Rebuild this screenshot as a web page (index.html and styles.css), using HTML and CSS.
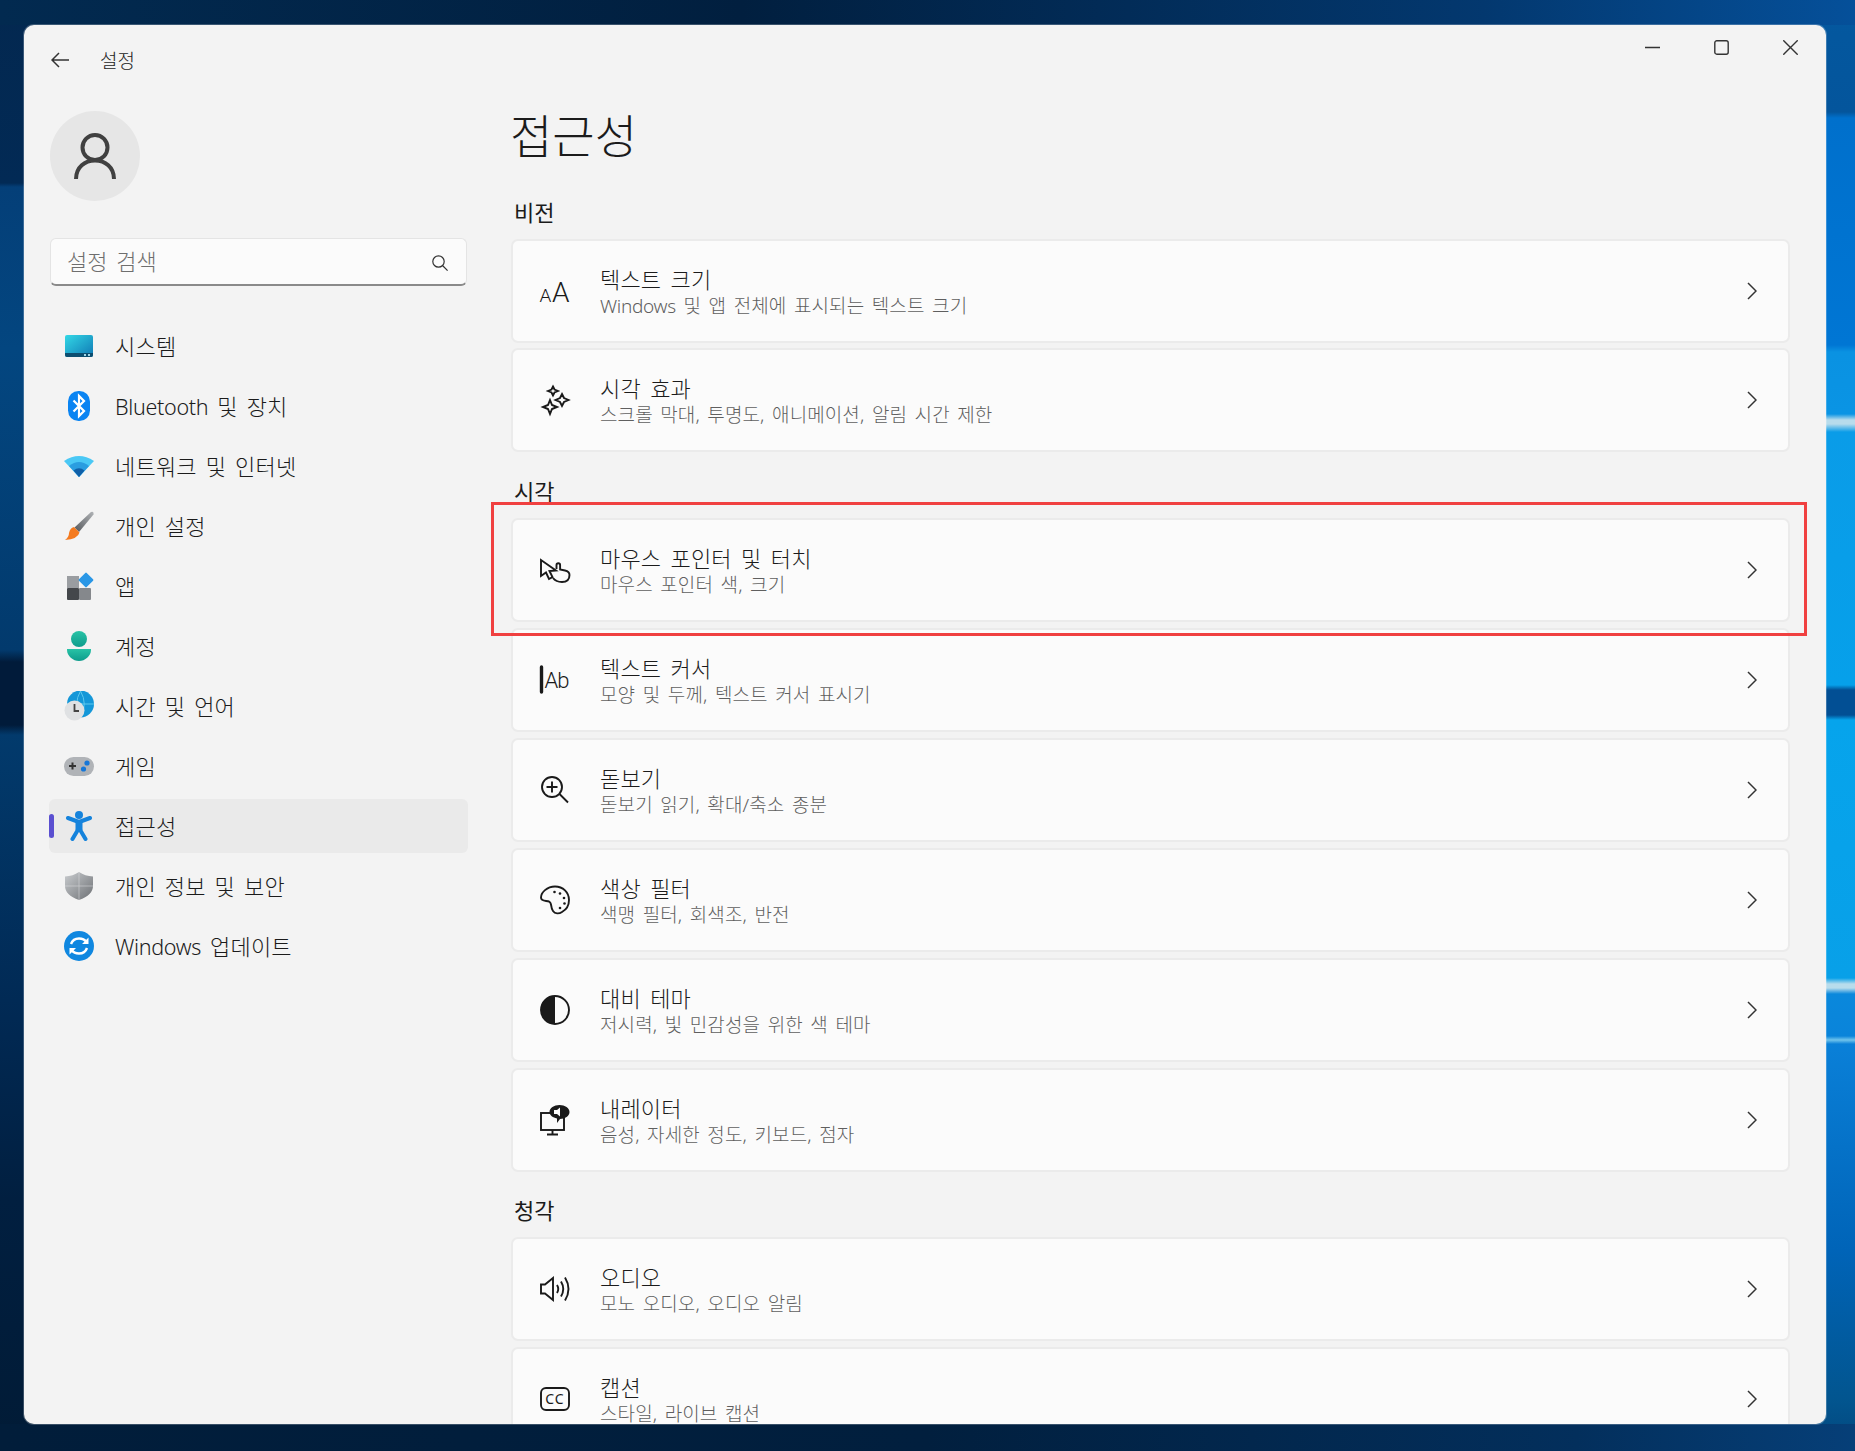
FILE: index.html
```html
<!DOCTYPE html>
<html lang="ko">
<head>
    <meta charset="UTF-8">
    <meta name="viewport" content="width=device-width, initial-scale=1.0">
    <title>설정</title>
    <link rel="stylesheet" href="styles.css">
</head>
<body>
    <div class="window">
        <aside class="sidebar">
            <div class="topbar">
                <svg class="back" viewBox="0 0 18 16"><path d="M8 1 L1 8 L8 15 M1 8 H18"/></svg>
                <span>설정</span>
            </div>
            <div class="avatar">
                <svg viewBox="0 0 42 46"><circle cx="21" cy="14.5" r="12.5"/><path d="M2 46 C2 34 11 27.5 21 27.5 C31 27.5 40 34 40 46"/></svg>
            </div>
            <div class="search">
                <span>설정 검색</span>
                <svg viewBox="0 0 16 16"><circle cx="6.5" cy="6.5" r="5.7"/><path d="M10.5 10.5 L15.6 15.6"/></svg>
            </div>
            <nav class="nav">
                <div class="nav-item">
                    <svg viewBox="0 0 30 30">
                        <defs><linearGradient id="sys" x1="0" y1="0" x2="1" y2="1"><stop offset="0" stop-color="#33d8e6"/><stop offset="1" stop-color="#0f78b4"/></linearGradient></defs>
                        <rect x="1" y="4" width="28" height="22" rx="2" fill="url(#sys)"/>
                        <path d="M1 22 H29 V24 a2 2 0 0 1 -2 2 H3 a2 2 0 0 1 -2 -2 Z" fill="#0c4e70"/>
                        <rect x="20" y="23" width="2" height="2" fill="#9fd6e8"/><rect x="24" y="23" width="2" height="2" fill="#9fd6e8"/>
                    </svg>
                    <span>시스템</span>
                </div>
                <div class="nav-item">
                    <svg viewBox="0 0 30 30">
                        <rect x="4" y="0" width="22" height="30" rx="10.5" fill="#0a84f2"/>
                        <path d="M9.5 9.5 L20 20 L15 25 V5 L20 10 L9.5 20.5" fill="none" stroke="#fff" stroke-width="2.2"/>
                    </svg>
                    <span><i>Bluetooth</i> 및 장치</span>
                </div>
                <div class="nav-item">
                    <svg viewBox="0 0 30 30">
                        <path d="M0 10 Q15 0 30 10 L15 26 Z" fill="#4ac8f5"/>
                        <path d="M5 15 Q15 7 25 15 L15 26 Z" fill="#2a9de0"/>
                        <path d="M9.5 19.5 Q15 15 20.5 19.5 L15 26 Z" fill="#0f5fa8"/>
                    </svg>
                    <span>네트워크 및 인터넷</span>
                </div>
                <div class="nav-item">
                    <svg viewBox="0 0 30 30">
                        <defs><linearGradient id="brush" x1="0" y1="1" x2="1" y2="0"><stop offset="0" stop-color="#55585c"/><stop offset="1" stop-color="#b0b3b6"/></linearGradient></defs>
                        <path d="M27 1 Q30 0 29.5 3.5 L15 21 L10.5 16.5 Z" fill="url(#brush)"/>
                        <path d="M10 16 L15.5 21.5 Q14 28 1 29 Q5 26 5 22 Q6 17 10 16 Z" fill="#f47a1f"/>
                    </svg>
                    <span>개인 설정</span>
                </div>
                <div class="nav-item">
                    <svg viewBox="0 0 30 30">
                        <rect x="3" y="5" width="12" height="12" fill="#9a9da1"/>
                        <rect x="3" y="17" width="12" height="12" rx="1" fill="#44474b"/>
                        <rect x="15" y="17" width="12" height="12" rx="1" fill="#85888c"/>
                        <rect x="16.5" y="3.5" width="11" height="11" rx="1" transform="rotate(45 22 9)" fill="#2a97e6"/>
                    </svg>
                    <span>앱</span>
                </div>
                <div class="nav-item">
                    <svg viewBox="0 0 30 30">
                        <defs><linearGradient id="acc" x1="0" y1="0" x2="0" y2="1"><stop offset="0" stop-color="#28c3a6"/><stop offset="1" stop-color="#0e9c8c"/></linearGradient></defs>
                        <circle cx="15" cy="8" r="8" fill="url(#acc)"/>
                        <path d="M3 18 H27 V19 C27 25 21 30 15 30 C9 30 3 25 3 19 Z" fill="url(#acc)"/>
                    </svg>
                    <span>계정</span>
                </div>
                <div class="nav-item">
                    <svg viewBox="0 0 30 30">
                        <circle cx="16.5" cy="13" r="13.5" fill="#1497d8"/>
                        <path d="M3 13 H30 M16.5 0 Q9 13 16.5 26 M16.5 0 Q24 13 16.5 26" fill="none" stroke="#5cc8ee" stroke-width="1"/>
                        <circle cx="10.5" cy="19.5" r="10" fill="#dfe1e3"/>
                        <path d="M10.5 13 V20 H15" fill="none" stroke="#444" stroke-width="1.8"/>
                    </svg>
                    <span>시간 및 언어</span>
                </div>
                <div class="nav-item">
                    <svg viewBox="0 0 30 30">
                        <rect x="0" y="6" width="30" height="19" rx="9.5" fill="#b0b3b7"/>
                        <path d="M5 15 H12 M8.5 11.5 V18.5" stroke="#333" stroke-width="2"/>
                        <circle cx="23" cy="12" r="2.6" fill="#1677d8"/><circle cx="19.5" cy="18" r="2.6" fill="#1677d8"/>
                    </svg>
                    <span>게임</span>
                </div>
                <div class="nav-item active">
                    <svg viewBox="0 0 30 30">
                        <circle cx="15" cy="4" r="4" fill="#1583dc"/>
                        <path d="M4 7 L15 11 L26 7 M15 17 L8.5 28 M15 17 L21.5 28" fill="none" stroke="#1583dc" stroke-width="4" stroke-linecap="round"/>
                        <path d="M15 10 V19" fill="none" stroke="#1583dc" stroke-width="7"/>
                    </svg>
                    <span>접근성</span>
                </div>
                <div class="nav-item">
                    <svg viewBox="0 0 30 30">
                        <defs><linearGradient id="shield" x1="0" y1="0" x2="1" y2="1"><stop offset="0" stop-color="#c9cccf"/><stop offset="1" stop-color="#6d7074"/></linearGradient></defs>
                        <path d="M15 1 Q21 5 29 5.5 V15 Q29 24 15 29 Q1 24 1 15 V5.5 Q9 5 15 1 Z" fill="url(#shield)"/>
                        <path d="M15 1 V29 M1 15 H29" stroke="#e4e5e7" stroke-width=".8" opacity=".6"/>
                    </svg>
                    <span>개인 정보 및 보안</span>
                </div>
                <div class="nav-item">
                    <svg viewBox="0 0 30 30">
                        <circle cx="15" cy="15" r="15" fill="#0f87e0"/>
                        <path d="M7 13 Q9 7.5 15 7.5 Q20 7.5 22.5 11 M23 17 Q21 22.5 15 22.5 Q10 22.5 7.5 19" fill="none" stroke="#fff" stroke-width="2.4"/>
                        <path d="M24.5 6.5 V13 H18 Z M5.5 23.5 V17 H12 Z" fill="#fff"/>
                    </svg>
                    <span><i>Windows</i> 업데이트</span>
                </div>
            </nav>
        </aside>

        <main class="content">
            <div class="controls">
                <svg viewBox="0 0 15 15"><path d="M0 7.5 H15"/></svg>
                <svg viewBox="0 0 15 15"><rect x=".8" y=".8" width="13.4" height="13.4" rx="2"/></svg>
                <svg viewBox="0 0 15 15"><path d="M.3 .3 L14.7 14.7 M14.7 .3 L.3 14.7"/></svg>
            </div>
            <h1>접근성</h1>

            <h2 class="first">비전</h2>
            <div class="group tight">
                <div class="card">
                    <svg class="icon" viewBox="0 0 30 30"><text x="-0.5" y="26" class="glyph small">A</text><text x="12" y="26" class="glyph big">A</text></svg>
                    <div class="card-text"><div class="card-title">텍스트 크기</div><div class="card-sub"><i>Windows</i> 및 앱 전체에 표시되는 텍스트 크기</div></div>
                    <svg class="chevron" viewBox="0 0 10 18"><path d="M1 1 L9 9 L1 17"/></svg>
                </div>
                <div class="card">
                    <svg class="icon" viewBox="0 0 30 30"><path d="M13 1.5 L14.5 4.5 L18 6 L14.5 7.5 L13 10.5 L11.5 7.5 L8 6 L11.5 4.5 Z M22 9 L24 13 L28.5 15 L24 17 L22 21 L20 17 L15.5 15 L20 13 Z M10 15 L12 20 L17 22 L12 24 L10 29 L8 24 L3 22 L8 20 Z"/></svg>
                    <div class="card-text"><div class="card-title">시각 효과</div><div class="card-sub">스크롤 막대, 투명도, 애니메이션, 알림 시간 제한</div></div>
                    <svg class="chevron" viewBox="0 0 10 18"><path d="M1 1 L9 9 L1 17"/></svg>
                </div>
            </div>

            <h2>시각</h2>
            <div class="group">
                <div class="card">
                    <svg class="icon" viewBox="0 0 30 30"><path d="M1 5 V21 L6 17.5 L9 24 L12.5 22 L9.5 16 L16 15.5 Z"/><path d="M16.5 14 V10 a1.8 1.8 0 0 1 3.6 0 V14.5 L25 15.5 Q29.5 16.5 29.5 20 Q29.5 27 22 27 Q16 27 13 23"/></svg>
                    <div class="card-text"><div class="card-title">마우스 포인터 및 터치</div><div class="card-sub">마우스 포인터 색, 크기</div></div>
                    <svg class="chevron" viewBox="0 0 10 18"><path d="M1 1 L9 9 L1 17"/></svg>
                </div>
                <div class="card">
                    <svg class="icon" viewBox="0 0 30 30"><path class="bar" d="M1.5 2 V27"/><text x="4.5" y="22.5" class="glyph ab">Ab</text></svg>
                    <div class="card-text"><div class="card-title">텍스트 커서</div><div class="card-sub">모양 및 두께, 텍스트 커서 표시기</div></div>
                    <svg class="chevron" viewBox="0 0 10 18"><path d="M1 1 L9 9 L1 17"/></svg>
                </div>
                <div class="card">
                    <svg class="icon" viewBox="0 0 30 30"><circle cx="12" cy="12" r="10"/><path d="M6.5 12 H17.5 M12 6.5 V17.5 M19.5 19 L28 27.5"/></svg>
                    <div class="card-text"><div class="card-title">돋보기</div><div class="card-sub">돋보기 읽기, 확대/축소 종분</div></div>
                    <svg class="chevron" viewBox="0 0 10 18"><path d="M1 1 L9 9 L1 17"/></svg>
                </div>
                <div class="card">
                    <svg class="icon" viewBox="0 0 30 30"><path d="M15 1.5 C7 1.5 1 7.5 1 12.5 C1 16.5 6 15.5 9 16.5 C12.5 18 10 22 13 26 C15 29 19 29 22 27 C26.5 24.5 29 20 29 15 C29 7.5 23 1.5 15 1.5 Z"/><g class="dots"><circle cx="14.5" cy="7" r="1.3"/><circle cx="20" cy="8.5" r="1.3"/><circle cx="24" cy="13" r="1.3"/><circle cx="24.5" cy="18.5" r="1.3"/><circle cx="20" cy="23" r="1.3"/></g></svg>
                    <div class="card-text"><div class="card-title">색상 필터</div><div class="card-sub">색맹 필터, 회색조, 반전</div></div>
                    <svg class="chevron" viewBox="0 0 10 18"><path d="M1 1 L9 9 L1 17"/></svg>
                </div>
                <div class="card">
                    <svg class="icon" viewBox="0 0 30 30"><circle cx="15" cy="15" r="14"/><path class="solid" d="M15 1 A14 14 0 0 0 15 29 Z"/></svg>
                    <div class="card-text"><div class="card-title">대비 테마</div><div class="card-sub">저시력, 빛 민감성을 위한 색 테마</div></div>
                    <svg class="chevron" viewBox="0 0 10 18"><path d="M1 1 L9 9 L1 17"/></svg>
                </div>
                <div class="card">
                    <svg class="icon" viewBox="0 0 30 30"><rect x="1" y="8" width="23" height="17"/><path d="M12.5 25 V29 M7 29.5 H18"/><path class="solid" d="M19.5 0 C25 0 29.5 3 29.5 7 C29.5 11 25 14 20 14 L17 18 V13.5 C13 12.5 9.5 10.5 9.5 7 C9.5 3 14 0 19.5 0 Z"/><path class="cut" d="M14 5 H17 L20 2.5 V11.5 L17 9 H14 Z"/></svg>
                    <div class="card-text"><div class="card-title">내레이터</div><div class="card-sub">음성, 자세한 정도, 키보드, 점자</div></div>
                    <svg class="chevron" viewBox="0 0 10 18"><path d="M1 1 L9 9 L1 17"/></svg>
                </div>
            </div>

            <h2 class="hearing">청각</h2>
            <div class="group">
                <div class="card">
                    <svg class="icon" viewBox="0 0 30 30"><path d="M1 10.5 H5 L13 4 V26 L5 19.5 H1 Z"/><path d="M17 11 Q19.5 15 17 19 M21 7.5 Q25.5 15 21 22.5 M25 3.5 Q32 15 25 26.5"/></svg>
                    <div class="card-text"><div class="card-title">오디오</div><div class="card-sub">모노 오디오, 오디오 알림</div></div>
                    <svg class="chevron" viewBox="0 0 10 18"><path d="M1 1 L9 9 L1 17"/></svg>
                </div>
                <div class="card">
                    <svg class="icon" viewBox="0 0 30 30"><rect x="1" y="4" width="28" height="22" rx="5"/><text x="15" y="20" class="glyph cc">CC</text></svg>
                    <div class="card-text"><div class="card-title">캡션</div><div class="card-sub">스타일, 라이브 캡션</div></div>
                    <svg class="chevron" viewBox="0 0 10 18"><path d="M1 1 L9 9 L1 17"/></svg>
                </div>
            </div>
        </main>
    </div>
    <div class="highlight"></div>
</body>
</html>
```

FILE: styles.css
```css
* {
    box-sizing: border-box;
}
html, body {
    height: 100%;
}
body {
    margin: 0;
    padding: 25px 29px 27px 24px;
    overflow: hidden;
    font-family: "Noto Sans", "Noto Sans CJK KR", sans-serif;
    font-weight: 300;
    color: #1b1b1b;
    background:
        linear-gradient(to right, #022a50, #011f3f 40%, #03386f 80%, #05509a) 0 0 / 100% 25px no-repeat,
        linear-gradient(to right, #011d3a, #011f3e 50%, #032f5c 85%, #063f78) 0 100% / 100% 27px no-repeat,
        linear-gradient(#032850 0, #022a55 183px, #043f78 187px, #034680 350px, #023a6d 650px, #011b3a 662px, #011b3a 725px, #023a6c 735px, #012a55 1000px, #011f40 1200px, #011b36 100%) 0 0 / 50% 100% no-repeat,
        linear-gradient(#04589f 0, #04559c 112px, #0070cc 118px, #0076d4 345px, #0a92e2 352px, #0a94e4 414px, #b8dcec 420px, #b8dcec 424px, #0a9ce8 432px, #06a0ea 685px, #024f94 690px, #024f94 715px, #06a4ec 720px, #08a0e8 978px, #b8dcec 984px, #b8dcec 988px, #0a88dc 994px, #0a84da 1036px, #70c4ec 1040px, #0a80d8 1044px, #0064b8 1250px, #02558f 1400px, #03467c 100%) 100% 0 / 50% 100% no-repeat;
}
i {
    font-style: normal;
}
.window {
    display: flex;
    height: 100%;
    background-color: #f3f3f3;
    border-radius: 10px;
    box-shadow: 0 0 0 1px rgba(255, 255, 255, 0.22);
    overflow: hidden;
}

/* sidebar */
.sidebar {
    flex: none;
    width: 487px;
    padding: 0 43px 0 25px;
}
.topbar {
    display: flex;
    align-items: center;
    gap: 31px;
    height: 70px;
    padding-left: 2px;
    font-size: 19px;
    word-spacing: 3px;
}
.back {
    width: 18px;
    height: 16px;
    fill: none;
    stroke: #333;
    stroke-width: 1.5;
}
.avatar {
    display: flex;
    align-items: center;
    justify-content: center;
    width: 90px;
    height: 90px;
    margin: 16px 0 0 1px;
    border-radius: 50%;
    background-color: #e6e6e6;
}
.avatar svg {
    width: 42px;
    height: 46px;
    fill: none;
    stroke: #404040;
    stroke-width: 4;
}
.search {
    display: flex;
    align-items: center;
    justify-content: space-between;
    height: 48px;
    margin: 37px 1px 0;
    padding: 0 18px 0 16px;
    background-color: #fbfbfb;
    border: 1px solid #e4e4e4;
    border-bottom: 2px solid #8a8a8a;
    border-radius: 6px;
    font-size: 22px;
    word-spacing: 3px;
    color: #6e6e6e;
}
.search span {
    padding-bottom: 3px;
}
.search svg {
    width: 16px;
    height: 16px;
    margin-top: 2px;
    fill: none;
    stroke: #333;
    stroke-width: 1.2;
}
.nav {
    display: flex;
    flex-direction: column;
    gap: 6px;
    margin-top: 33px;
}
.nav-item {
    position: relative;
    display: flex;
    align-items: center;
    gap: 21px;
    height: 54px;
    padding-left: 15px;
    border-radius: 6px;
    font-size: 22px;
    letter-spacing: 0.2px;
    word-spacing: 3px;
}
.nav-item span {
    padding-bottom: 2px;
}
.nav-item svg {
    flex: none;
    width: 30px;
    height: 30px;
}
.nav-item i {
    font-size: 21.5px;
    letter-spacing: -0.3px;
}
.nav-item.active {
    background-color: #eaeaea;
}
.nav-item.active::before {
    content: "";
    position: absolute;
    left: 0;
    top: 15px;
    width: 5px;
    height: 24px;
    border-radius: 3px;
    background-color: #5a4fd0;
}

/* main column */
.content {
    flex: 1;
    min-width: 0;
    padding-right: 36px;
}
.controls {
    display: flex;
    justify-content: flex-end;
    gap: 54px;
    height: 78px;
    padding-top: 15px;
    margin-right: -8px;
}
.controls svg {
    width: 15px;
    height: 15px;
    fill: none;
    stroke: #333;
    stroke-width: 1.4;
}
h1 {
    margin: 0 0 0 -1px;
    font-size: 46px;
    font-weight: 300;
    line-height: 65px;
}
h2 {
    margin: 24px 0 12px 3px;
    font-size: 22px;
    font-weight: 400;
    line-height: 30px;
}
h2.first {
    margin-top: 29px;
}
h2.hearing {
    margin-top: 23px;
}
.group {
    display: flex;
    flex-direction: column;
    gap: 6px;
}
.group.tight {
    gap: 5px;
}
.card {
    flex: none;
    display: flex;
    align-items: center;
    height: 104px;
    padding: 0 31px 0 27px;
    background-color: #fbfbfb;
    border: 2px solid #ebebeb;
    border-radius: 7px;
}
.card-text {
    flex: 1;
    margin-left: 30px;
    padding-top: 1px;
}
.card-title {
    font-size: 22px;
    line-height: 28px;
    letter-spacing: 0.15px;
    word-spacing: 3.5px;
}
.card-sub {
    font-size: 19px;
    line-height: 26px;
    letter-spacing: 0.1px;
    word-spacing: 2.5px;
    color: #5f5f5f;
}
.card-sub i {
    letter-spacing: -0.3px;
}
.chevron {
    flex: none;
    width: 10px;
    height: 18px;
    fill: none;
    stroke: #333;
    stroke-width: 1.5;
}

/* line icons */
.icon {
    flex: none;
    width: 30px;
    height: 30px;
    overflow: visible;
    fill: none;
    stroke: #1a1a1a;
    stroke-width: 1.9;
}
.icon .solid, .icon .dots {
    fill: #1a1a1a;
    stroke: none;
}
.icon .cut {
    fill: #fbfbfb;
    stroke: none;
}
.icon .bar {
    stroke-width: 3.4;
    stroke-linecap: round;
}
.glyph {
    font-family: Roboto, sans-serif;
    font-weight: 300;
    fill: #1a1a1a;
    stroke: none;
}
.glyph.small {
    font-size: 19px;
}
.glyph.big {
    font-size: 28px;
}
.glyph.ab {
    font-size: 22px;
    letter-spacing: -1px;
}
.glyph.cc {
    font-family: "Noto Sans", sans-serif;
    font-weight: 400;
    font-size: 14px;
    letter-spacing: 1px;
    text-anchor: middle;
}

/* annotation drawn over the screenshot */
.highlight {
    position: absolute;
    left: 491px;
    top: 502px;
    width: 1316px;
    height: 134px;
    border: 3px solid #f04040;
    pointer-events: none;
}
```
